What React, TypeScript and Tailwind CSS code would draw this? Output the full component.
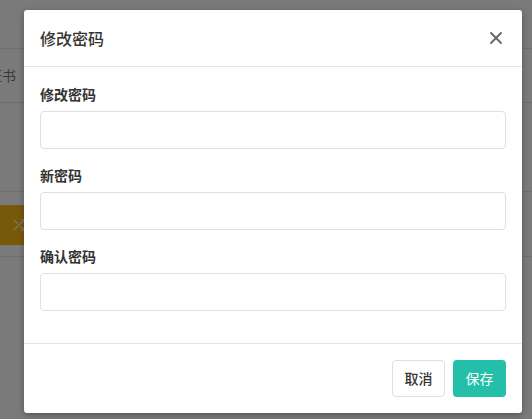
import React from "react";

const font = { fontFamily: '"Noto Sans CJK SC", "Noto Sans", sans-serif' };

function Field({ label }: { label: string }) {
  return (
    <div className="flex flex-col">
      <label className="h-[20px] text-[14px] font-semibold leading-[20px] text-[#333]">{label}</label>
      <input
        type="password"
        className="mt-[7px] h-[38px] w-full rounded-[4px] border border-[#dcdfe6] bg-white outline-none"
      />
    </div>
  );
}

export default function App() {
  return (
    <div className="relative h-[419px] w-[532px] overflow-hidden bg-white" style={font}>
      {/* underlying page */}
      <div className="flex flex-col">
        <div className="h-[49px] border-b border-[#e6e6e6]" />
        <div className="flex h-[54px] items-center border-b border-[#e6e6e6]">
          <span className="-ml-[12px] text-[14px] text-[#777]">证书</span>
        </div>
        <div className="h-[89px] border-b border-[#e6e6e6]" />
        <div className="pt-[13px]">
          <div className="flex h-[40px] w-[200px] items-center bg-[#fbb914] pl-[12px]">
            <svg width="14" height="14" viewBox="0 0 24 24" fill="none" stroke="#fff" strokeWidth="2" strokeLinecap="round" strokeLinejoin="round">
              <path d="M16 3h5v5" />
              <path d="M4 20L21 3" />
              <path d="M21 16v5h-5" />
              <path d="M15 15l6 6" />
              <path d="M4 4l5 5" />
            </svg>
          </div>
        </div>
        <div className="h-[12px] border-b border-[#e6e6e6]" />
      </div>

      {/* overlay */}
      <div className="absolute inset-0 bg-[rgba(0,0,0,0.52)]">
        <div className="pl-[24px] pt-[10px]">
          <div className="flex h-[403px] w-[498px] flex-col rounded-[3px] bg-white shadow-[0_2px_6px_rgba(0,0,0,0.3)]">
            <div className="flex h-[57px] items-center justify-between border-b border-[#e5e5e5] pl-[16px] pr-[20px]">
              <span className="text-[16px] font-medium text-[#333]">修改密码</span>
              <svg width="12" height="12" viewBox="0 0 12 12" stroke="#666" strokeWidth="1.8" strokeLinecap="round">
                <path d="M1 1l10 10M11 1L1 11" />
              </svg>
            </div>
            <div className="flex flex-1 flex-col gap-[16px] px-[16px] pt-[17px]">
              <Field label="修改密码" />
              <Field label="新密码" />
              <Field label="确认密码" />
            </div>
            <div className="flex h-[70px] items-center justify-end gap-[8px] border-t border-[#e5e5e5] pr-[16px]">
              <button className="h-[37px] w-[53px] rounded-[4px] border border-[#dcdfe6] bg-white text-[14px] font-medium text-[#333]">
                取消
              </button>
              <button className="h-[37px] w-[53px] rounded-[4px] bg-[#23bfa8] text-[14px] text-white">
                保存
              </button>
            </div>
          </div>
        </div>
      </div>
    </div>
  );
}
